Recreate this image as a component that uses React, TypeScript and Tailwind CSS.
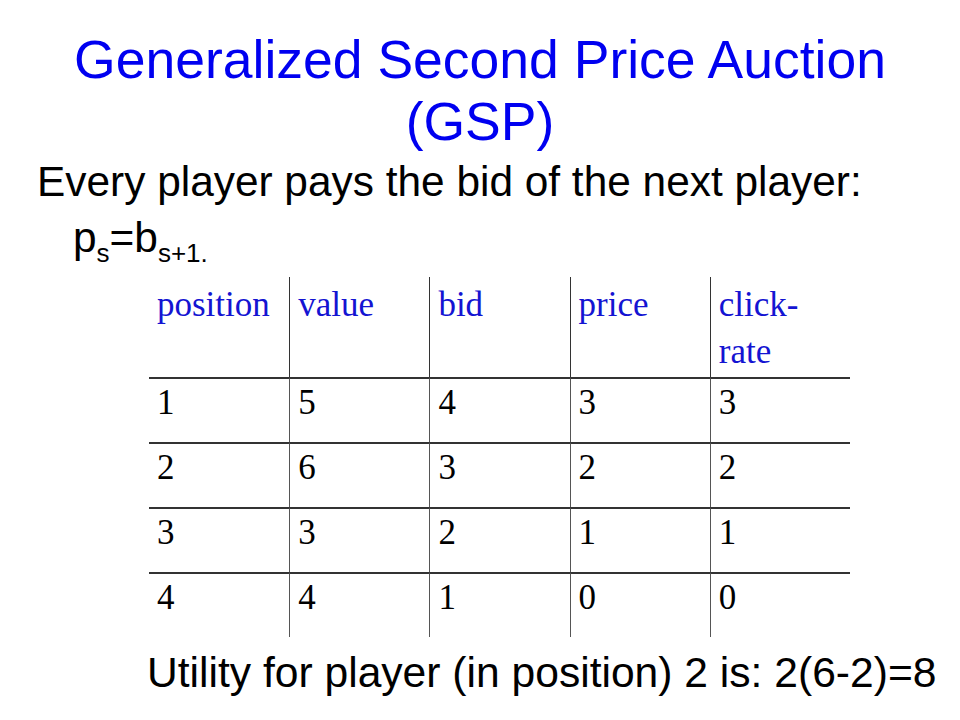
const header = ['position', 'value', 'bid', 'price', 'click-rate'];

const rows = [
  ['1', '5', '4', '3', '3'],
  ['2', '6', '3', '2', '2'],
  ['3', '3', '2', '1', '1'],
  ['4', '4', '1', '0', '0'],
];

export default function App() {
  return (
    <div className="w-[960px] h-[720px] bg-white overflow-hidden text-black font-['Liberation_Sans',Arial,sans-serif]">
      <h1 className="pt-[29px] text-center text-[53.5px] leading-[62px] text-[#0000f0]">
        Generalized Second Price Auction
        <br />
        (GSP)
      </h1>

      <p className="mt-[1px] pl-[73px] -indent-[36px] text-[42.4px] leading-[56px]">
        Every player pays the bid of the next player:
        <br />
        p<span className="relative top-[10px] text-[26px] leading-none">s</span>=b
        <span className="relative top-[10px] text-[26px] leading-none">s+1.</span>
      </p>

      <div className="mt-[11px] ml-[149px] w-[701px] grid grid-cols-5 font-['Liberation_Serif','Times_New_Roman',serif] text-[35px] leading-[47px]">
        {header.map((h, i) => (
          <div
            key={h}
            className={`h-[100px] pt-[4px] text-[#1414d2] ${i === 0 ? 'pl-[8px]' : 'pl-[8px] border-l border-[#333]'}`}
          >
            {h === 'click-rate' ? (
              <>
                click-
                <br />
                rate
              </>
            ) : (
              h
            )}
          </div>
        ))}
        {rows.map((r, ri) =>
          r.map((v, ci) => (
            <div
              key={`${ri}-${ci}`}
              className={`h-[65px] border-t-2 border-t-[#333] ${ci === 0 ? 'pl-[8px]' : 'pl-[8px] border-l border-l-[#555]'}`}
            >
              {v}
            </div>
          ))
        )}
      </div>

      <p className="mt-[7px] pl-[147px] text-[42.6px] leading-[56px]">
        Utility for player (in position) 2 is: 2(6-2)=8
      </p>
    </div>
  );
}
